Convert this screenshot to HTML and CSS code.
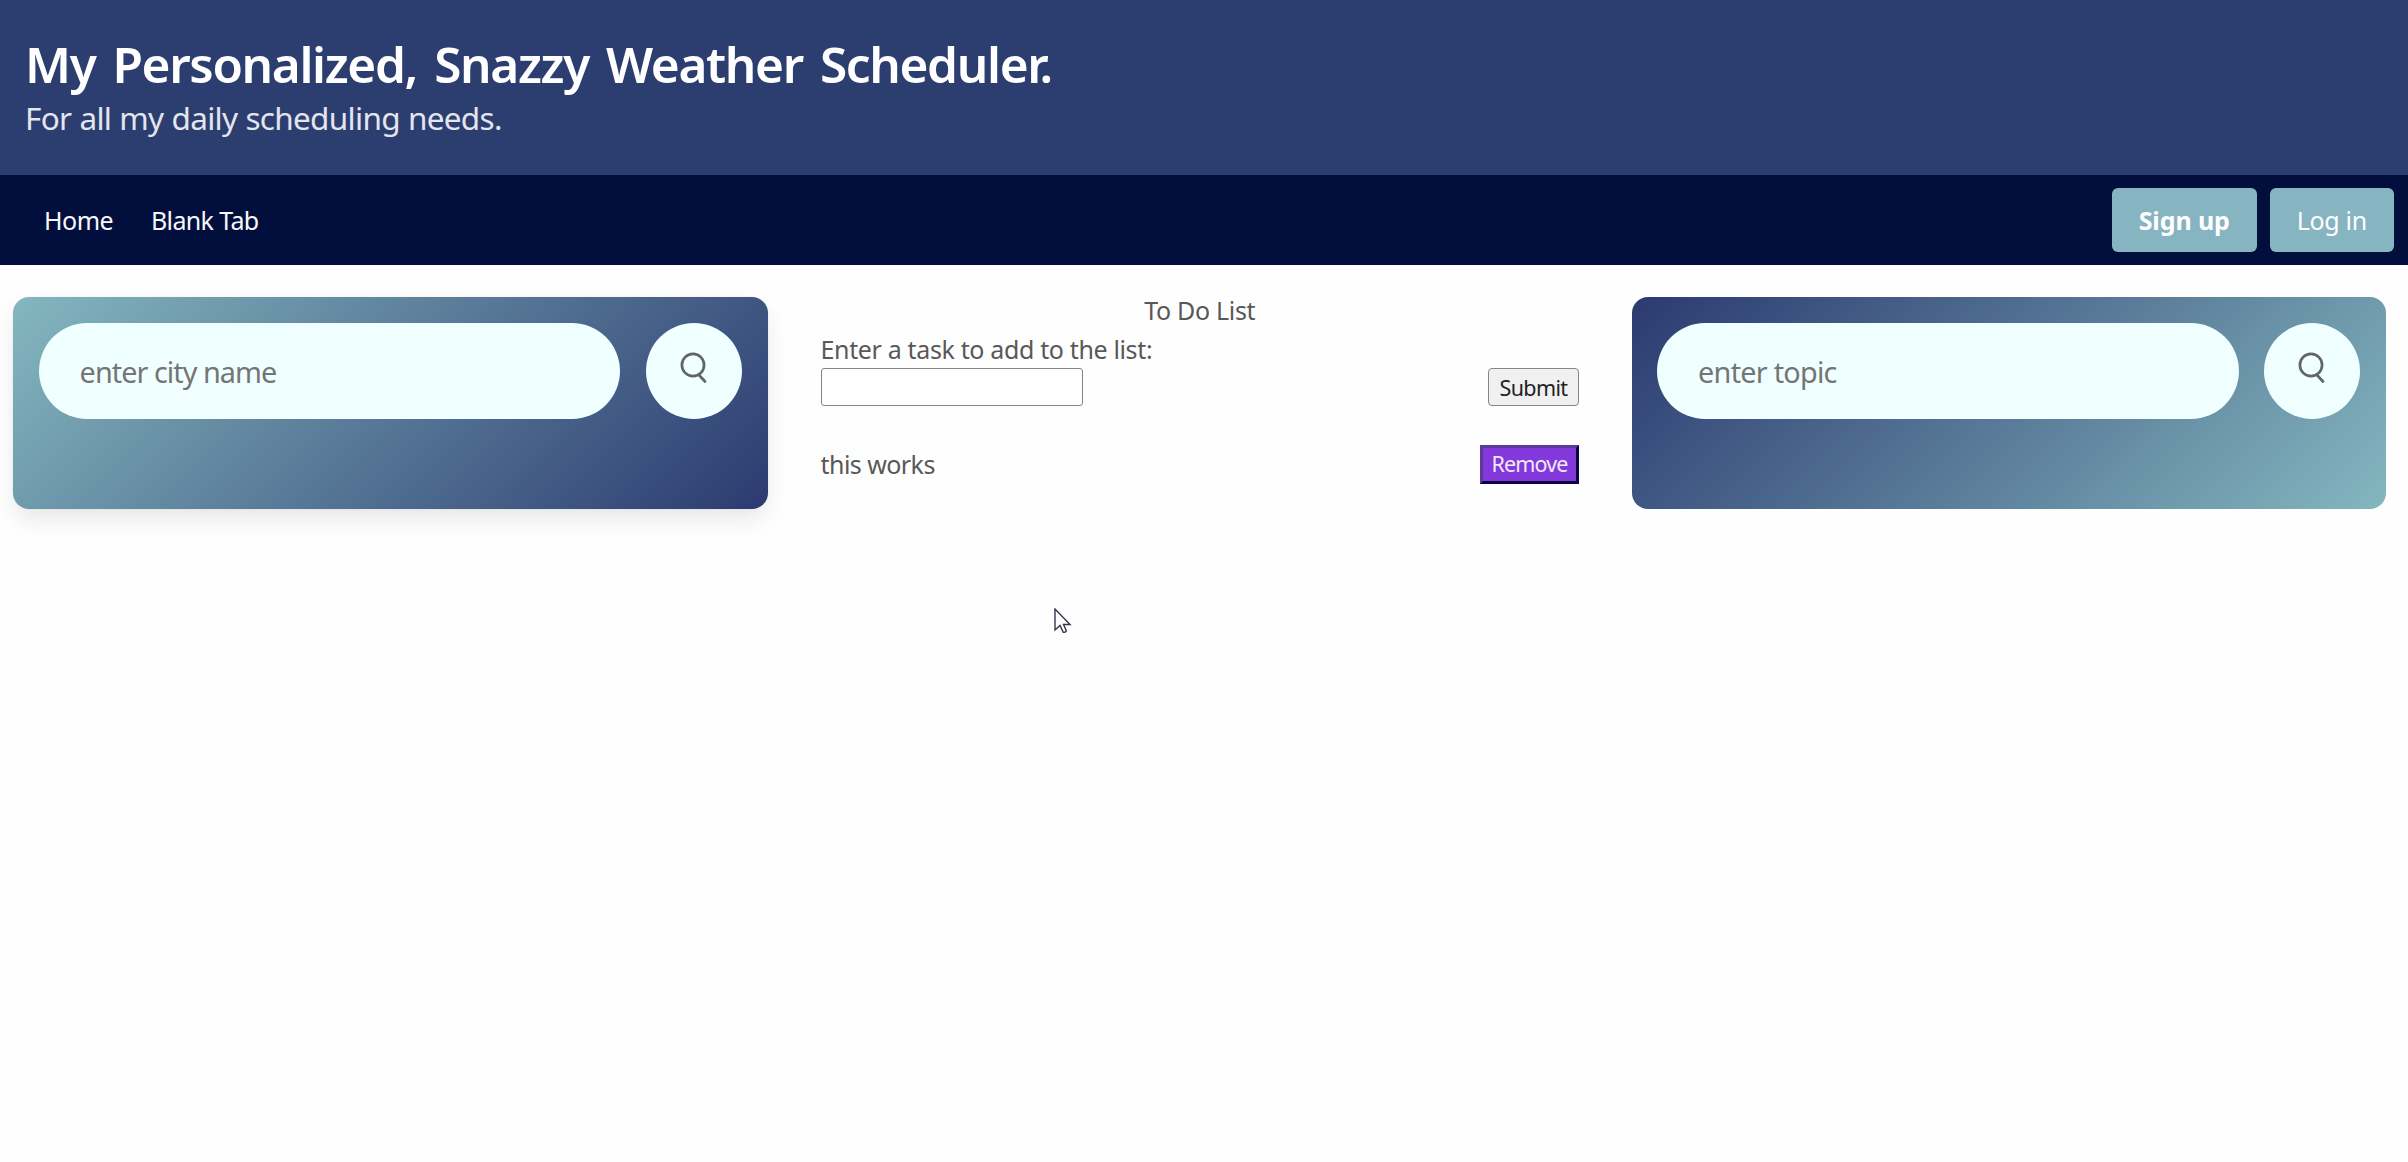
FILE: index.html
```html
<!DOCTYPE html>
<html lang="en">
<head>
<meta charset="utf-8">
<title>Weather Scheduler</title>
<link rel="stylesheet" href="styles.css">
</head>
<body>
<header class="hero">
  <h1 class="title">My Personalized, Snazzy Weather Scheduler.</h1>
  <p class="subtitle">For all my daily scheduling needs.</p>
</header>
<nav class="navbar">
  <a class="nav-item home">Home</a>
  <a class="nav-item blank">Blank Tab</a>
  <div class="buttons">
    <a class="button signup">Sign up</a>
    <a class="button login">Log in</a>
  </div>
</nav>
<main class="columns">
  <section class="card weather">
    <input class="search city" type="text" placeholder="enter city name">
    <button class="round" aria-label="Search city">
      <svg class="glass" viewBox="0 0 28 32"><circle cx="13" cy="13" r="11.1"/><path d="M18.5 22.5L25 29.5"/></svg>
    </button>
  </section>
  <section class="todo">
    <h2 class="todo-title">To Do List</h2>
    <label class="todo-label" for="task">Enter a task to add to the list:</label>
    <div class="row">
      <input class="task" id="task" type="text">
      <button class="submit">Submit</button>
    </div>
    <div class="row item">
      <span class="item-text">this works</span>
      <button class="remove">Remove</button>
    </div>
  </section>
  <section class="card news">
    <input class="search topic" type="text" placeholder="enter topic">
    <button class="round" aria-label="Search topic">
      <svg class="glass" viewBox="0 0 28 32"><circle cx="13" cy="13" r="11.1"/><path d="M18.5 22.5L25 29.5"/></svg>
    </button>
  </section>
</main>
<svg class="cursor" viewBox="0 0 18 26"><path d="M1 1V22L6 17.5L9.3 24.3Q11.3 24.6 12.3 22.8L9.5 16.5H16Z"/></svg>
</body>
</html>
```
FILE: styles.css
```css
* { box-sizing: border-box; }
body {
  margin: 0;
  min-height: 1162px;
  background: #fefefe;
  color: #585858;
  font: 25px/38.4px "Noto Sans", "Open Sans", sans-serif;
}
h1, h2, p { margin: 0; font-weight: 400; }
input, button { font-family: inherit; margin: 0; }

.hero { height: 175px; padding: 35px 25px 0; background: #2c3e6f; }
.title { font-size: 49.5px; font-weight: 600; line-height: 58px; color: #fff; white-space: nowrap; letter-spacing: -1.35px; word-spacing: 5.6px; }
.subtitle { font-size: 31.5px; line-height: 48px; margin-top: 1px; color: #e3e6ee; letter-spacing: -.7px; word-spacing: .6px; }

.navbar { height: 90px; display: flex; align-items: center; padding: 0 14px 0 44px; background: #020f3d; color: #f8f8fa; }
.nav-item { letter-spacing: -.5px; }
.home { width: 107px; }
.blank { letter-spacing: -.65px; }
.buttons { margin-left: auto; display: flex; gap: 12.5px; }
.button { height: 64px; display: flex; align-items: center; justify-content: center; border-radius: 6px; background: #86b4c0; color: #fff; }
.signup { width: 145.5px; font-weight: 700; letter-spacing: -.1px; }
.login { width: 124.5px; letter-spacing: -.3px; }

.columns { display: flex; align-items: flex-start; padding: 32px 22px 0 13px; }
.card { width: 754.5px; height: 211.5px; display: flex; align-items: flex-start; gap: 25.6px; padding: 25.6px; border-radius: 16px; }
.weather { background: linear-gradient(135deg, #84b7bf, #2b3a70); box-shadow: 0 12px 24px -3px rgba(10, 10, 10, .1), 0 0 0 1px rgba(10, 10, 10, .02); }
.news { background: linear-gradient(135deg, #2b3a70, #84b7bf); }
.search { flex: 1; min-width: 0; height: 96px; border: 0; border-radius: 48px; padding: 1px 41px 0; background: azure; font-size: 28.8px; letter-spacing: -.95px; }
.topic { letter-spacing: -.75px; }
.search::placeholder { color: #757575; }
.round { width: 96px; height: 96px; border: 0; border-radius: 50%; background: azure; padding: 0 0 6px; display: flex; align-items: center; justify-content: center; }
.glass { width: 28px; height: 32px; fill: none; stroke: #626565; stroke-width: 2.7; stroke-linecap: round; }

.todo { width: 758.5px; margin: -6px 52.5px 0 53px; }
.todo-title { font-size: 25px; text-align: center; letter-spacing: -.3px; }
.todo-label { display: block; padding-top: 1px; margin-bottom: -1px; letter-spacing: -.35px; }
.row { display: flex; justify-content: space-between; align-items: center; }
.task { width: 262px; height: 38px; border: 1.6px solid #858585; border-radius: 3px; background: #fff; }
.submit { width: 91px; height: 38px; border: 1.6px solid #858585; border-radius: 4px; background: #f0f0f1; color: #222; font-size: 21.5px; padding: 2px 0 0; line-height: 30px; letter-spacing: -.65px; }
.item { margin-top: 39px; }
.item-text { letter-spacing: -.55px; }
.remove { width: 99px; height: 39px; border: 3px solid; border-color: #5a3a9c #0c0540 #0c0540 #5a3a9c; background: #8338dc; color: #f1e8fb; font-size: 21.5px; padding: 0; line-height: 30px; letter-spacing: -.85px; }

.cursor { position: absolute; left: 1054px; top: 608px; width: 18px; height: 26px; fill: #fff; stroke: #35354a; stroke-width: 1.4; }
```
